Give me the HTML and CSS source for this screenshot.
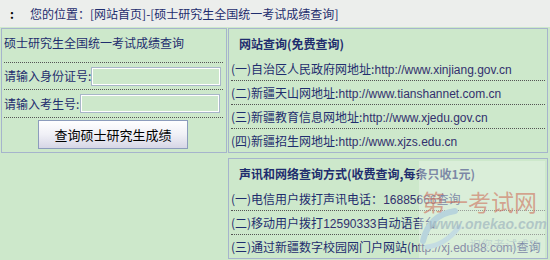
FILE: index.html
```html
<!DOCTYPE html>
<html lang="zh-CN">
<head>
  <meta charset="UTF-8">
  <title>硕士研究生全国统一考试成绩查询</title>
  <link rel="stylesheet" href="styles.css">
</head>
<body>
  <div class="crumb">
    <span class="dot">:</span>您的位置：[<a href="#">网站首页</a>]-[<a href="#">硕士研究生全国统一考试成绩查询</a>]
  </div>

  <div class="main">
    <form class="box left-box">
      <div class="lb-title">硕士研究生全国统一考试成绩查询</div>
      <div class="lb-row row-id">
        <label for="sfz">请输入身份证号:</label>
        <input type="text" id="sfz" class="in-id">
      </div>
      <div class="lb-row row-ks">
        <label for="ksh">请输入考生号:</label>
        <input type="text" id="ksh" class="in-ks">
      </div>
      <div class="lb-btn">
        <button type="button">查询硕士研究生成绩</button>
      </div>
    </form>

    <div class="right-col">
      <div class="box info-box">
        <div class="ib-title">网站查询(免费查询)</div>
        <div class="ib-row">(一)自治区人民政府网地址:<span class="url">http://www.xinjiang.gov.cn</span></div>
        <div class="ib-row">(二)新疆天山网地址:<span class="url">http://www.tianshannet.com.cn</span></div>
        <div class="ib-row">(三)新疆教育信息网地址:<span class="url">http://www.xjedu.gov.cn</span></div>
        <div class="ib-row last">(四)新疆招生网地址:<span class="url">http://www.xjzs.edu.cn</span></div>
      </div>

      <div class="box info-box paid">
        <div class="ib-title">声讯和网络查询方式(收费查询,每条只收1元)</div>
        <div class="ib-row">(一)电信用户拨打声讯电话：<span class="url">16885666</span>查询</div>
        <div class="ib-row">(二)移动用户拨打<span class="url">12590333</span>自动语音台</div>
        <div class="ib-row last">(三)通过新疆数字校园网门户网站(<span class="url">http://xj.edu88.com</span>)查询</div>

        <div class="mark">
          <svg class="mark-logo" width="52" height="52" viewBox="0 0 52 52">
            <path d="M8 40 Q14 14 40 10" fill="none" stroke="#b8d4dc" stroke-width="6" stroke-linecap="round"/>
            <path d="M12 46 Q30 44 44 26" fill="none" stroke="#c4dce2" stroke-width="5" stroke-linecap="round"/>
          </svg>
          <div class="mark-name">第一考试网</div>
          <div class="mark-url">www.onekao.com</div>
          <div class="mark-wish">祝您考试成功</div>
        </div>
      </div>
    </div>
  </div>
</body>
</html>
```

FILE: styles.css
```css
body {
  margin: 0;
  font-family: "Noto Sans CJK SC", "Liberation Sans", sans-serif;
  font-size: 12px;
  color: #1f2d6e;
  background-color: #cde8cb;
}
a {
  color: #1f2d6e;
  text-decoration: none;
}
.crumb {
  height: 27px;
  line-height: 27px;
  background: #eceeec;
  white-space: nowrap;
}
.dot {
  display: inline-block;
  width: 30px;
  padding-left: 10px;
  box-sizing: border-box;
  font-weight: bold;
  color: #000;
}
.main {
  display: flex;
  gap: 1px;
  padding: 1px 0 0 1px;
}
.box {
  border: 1px solid #a6b4cc;
  box-sizing: border-box;
}
.left-box {
  width: 226px;
  height: 125px;
  margin: 0;
  padding: 0 3px 0 2px;
}
.lb-title {
  height: 28px;
  padding-top: 5px;
  line-height: 18px;
  border-bottom: 1px dotted #555;
}
.lb-row {
  display: flex;
  align-items: center;
  white-space: nowrap;
  border-bottom: 1px dotted #555;
}
.row-id {
  height: 26px;
}
.row-ks {
  height: 27px;
}
.lb-row label {
  flex-shrink: 0;
  line-height: 18px;
}
.lb-row input {
  flex-shrink: 0;
  height: 19px;
  box-sizing: border-box;
  border: 1px solid #a8b6c8;
  box-shadow: inset 0 0 0 1px #fff;
  background: transparent;
  padding: 0 3px;
  font-size: 12px;
}
.in-id {
  width: 130px;
}
.in-ks {
  width: 140px;
  margin-left: 1px;
}
.lb-btn {
  padding: 2px 0 0 34px;
}
.lb-btn button {
  width: 150px;
  height: 29px;
  border: 1px solid #8c9cbc;
  background: linear-gradient(#ffffff, #f0f0f6 50%, #d6d6e6);
  font-family: "Noto Sans CJK SC", sans-serif;
  font-size: 13px;
  color: #000;
  padding: 0;
}
.right-col {
  width: 320px;
  display: flex;
  flex-direction: column;
  gap: 5px;
}
.info-box {
  position: relative;
  padding: 0 2px;
  height: 125px;
}
.info-box.paid {
  height: 101px;
}
.ib-title {
  height: 28px;
  line-height: 29px;
  padding-left: 8px;
  font-weight: bold;
}
.ib-row {
  height: 23px;
  line-height: 23px;
  border-bottom: 1px dotted #555;
  white-space: nowrap;
}
.ib-row.last {
  border-bottom: none;
}
.url {
  font-family: "Liberation Sans", sans-serif;
  color: #33306e;
}
.mark {
  position: absolute;
  right: 2px;
  top: 2px;
  width: 126px;
  height: 97px;
  background: rgba(235, 246, 236, 0.45);
  pointer-events: none;
}
.mark-logo {
  position: absolute;
  left: -4px;
  top: 40px;
}
.mark-name {
  position: absolute;
  left: 3px;
  top: 27px;
  font-size: 23px;
  line-height: 26px;
  color: rgba(206, 110, 90, 0.6);
}
.mark-url {
  position: absolute;
  left: 10px;
  top: 55px;
  font-family: "Liberation Sans", sans-serif;
  font-size: 14px;
  font-style: italic;
  font-weight: bold;
  white-space: nowrap;
  color: rgba(150, 172, 186, 0.6);
}
.mark-wish {
  position: absolute;
  left: 50px;
  top: 77px;
  font-size: 12px;
  line-height: 14px;
  white-space: nowrap;
  color: rgba(170, 192, 200, 0.6);
}
```
